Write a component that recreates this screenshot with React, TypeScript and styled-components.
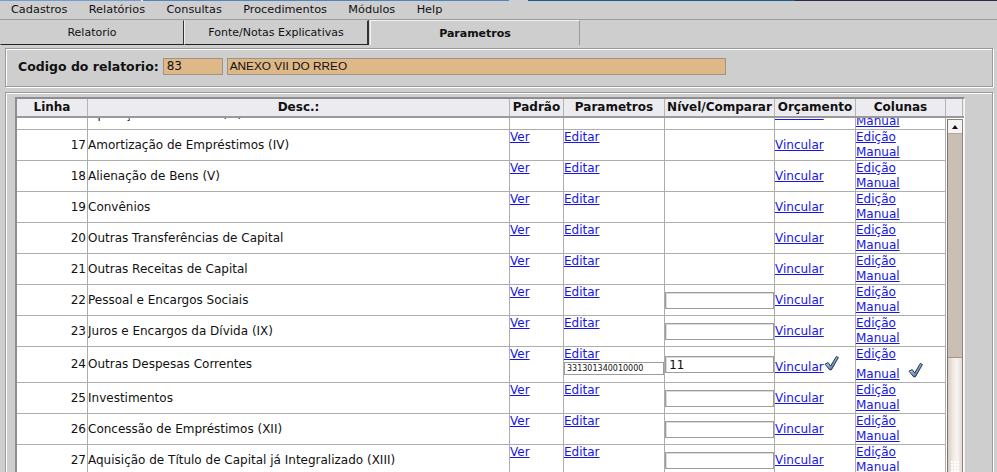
import React, { useId, useLayoutEffect, useRef } from 'react';
import styled, { createGlobalStyle } from 'styled-components';

const GlobalStyle = createGlobalStyle`
  html, body {
    margin: 0;
    height: 100%;
    overflow: hidden;
    background: #cecece;
    font-family: "DejaVu Sans", sans-serif;
    color: #111;
  }

  #root {
    height: 100%;
    display: flex;
    flex-direction: column;
  }
`;

const COLS = '71px 422px 54px 101px 110px 81px 90px';

const TopStrip = styled.div`
  height: 1px;
  flex: none;
  background: linear-gradient(
    to right,
    #6d9fd6 0,
    #6d9fd6 141px,
    #f0f0f0 141px,
    #f0f0f0 143px,
    #4f86c2 143px,
    #4f86c2 509px,
    #c3ced8 509px,
    #c3ced8 528px,
    #1b5b8c 528px,
    #1b5b8c 795px,
    #2c2c46 795px
  );
`;

const MenuBar = styled.nav`
  height: 18px;
  flex: none;
  display: flex;
  align-items: center;
  padding-left: 0.3px;
  border-bottom: 1px solid #9c9c9c;
`;

const MenuItem = styled.span`
  padding: 0 10.7px;
  font-size: 11.3px;
  line-height: 18px;
`;

const TabBar = styled.div`
  height: 25px;
  flex: none;
  display: flex;
`;

const Tab = styled.div<{ $active?: boolean; $width: number; $thick?: boolean }>`
  box-sizing: border-box;
  width: ${(p) => p.$width}px;
  display: flex;
  align-items: center;
  justify-content: center;
  font-size: 11px;
  font-weight: ${(p) => (p.$active ? 'bold' : 'normal')};
  border-left: 1px solid ${(p) => (p.$active ? '#f4f4f4' : '#f0f0f0')};
  border-top: 1px solid ${(p) => (p.$active ? '#f2f2f2' : '#cecece')};
  border-right: ${(p) => (p.$active ? '1px solid #9a9a9a' : p.$thick ? '2px solid #333' : '1px solid #333')};
  border-bottom: ${(p) => (p.$active ? 'none' : '1px solid #222')};
  margin-left: ${(p) => (p.$active ? '1px' : '0')};

  &:first-child {
    border-left-color: #cecece;
  }
`;

const Panel = styled.section<{ $grow?: boolean }>`
  box-sizing: border-box;
  width: 988px;
  margin-left: 5px;
  border: 1px solid #9a9a9a;
  box-shadow: inset 1px 1px 0 #fff, 1px 1px 0 #fff;
  flex: ${(p) => (p.$grow ? '1 0 auto' : 'none')};
`;

const CodePanel = styled(Panel)`
  height: 39px;
  margin-top: 3px;
  display: flex;
  align-items: center;
  padding: 0 0 2px 12px;
  gap: 4px;
`;

const CodeLabel = styled.label`
  font-size: 12.5px;
  font-weight: bold;
`;

const TanInput = styled.div<{ $width: number; $sans?: boolean }>`
  box-sizing: border-box;
  width: ${(p) => p.$width}px;
  height: 17px;
  background: #dfb887;
  border: 1px solid #9d9488;
  padding-left: ${(p) => (p.$sans ? 2 : 3)}px;
  font-family: ${(p) => (p.$sans ? '"Liberation Sans", Arial, sans-serif' : '"DejaVu Sans", sans-serif')};
  font-size: ${(p) => (p.$sans ? 11.8 : 12)}px;
  line-height: 15px;
`;

const GridPanel = styled(Panel)`
  margin-top: 5px;
  padding: 4px 0 0 9px;
`;

const GridFrame = styled.div`
  width: 947px;
  border-top: 2px solid #8e8e8e;
  border-left: 2px solid #8e8e8e;
  border-right: 1px solid #f4f4f4;
  background: #fff;
`;

const HeaderRow = styled.div`
  display: grid;
  grid-template-columns: ${COLS} 17px;
  height: 17px;
  background: #ececf0;
  border-bottom: 2px solid #9a9a9a;
`;

const HeaderCell = styled.div`
  border-right: 1px solid #b4b4b4;
  font-size: 12px;
  font-weight: bold;
  line-height: 17px;
  text-align: center;
  white-space: nowrap;
  overflow: hidden;
`;

const BodyArea = styled.div`
  display: flex;
  height: 362px;
`;

const Body = styled.div`
  width: 929px;
  height: 100%;
  overflow: hidden;
`;

const Row = styled.div`
  display: grid;
  grid-template-columns: ${COLS};
  border-bottom: 1px solid #adadad;
  font-size: 12px;
  line-height: 15px;
`;

const Cell = styled.div<{ $align?: 'start' | 'end'; $middle?: boolean }>`
  box-sizing: border-box;
  min-height: 30px;
  border-right: 1px solid #adadad;
  display: flex;
  flex-direction: column;
  justify-content: ${(p) => (p.$middle ? 'center' : 'flex-start')};
  align-items: ${(p) => (p.$align === 'end' ? 'flex-end' : 'flex-start')};
  padding-right: ${(p) => (p.$align === 'end' ? '1px' : '0')};
  white-space: nowrap;
  overflow: hidden;
`;

const Link = styled.a`
  color: #1515e6;
  text-decoration: underline;
  cursor: pointer;
`;

const LinkLine = styled.div`
  line-height: 15px;
`;

const LevelInput = styled.div`
  box-sizing: border-box;
  width: 109px;
  height: 17px;
  background: #fff;
  border: 1px solid #9c9c9c;
  box-shadow: inset 1px 1px 0 #dcdcdc;
  padding-left: 3px;
  font-family: "DejaVu Sans Mono", monospace;
  font-size: 12.5px;
  line-height: 15px;
`;

const ParamInput = styled.div`
  box-sizing: border-box;
  width: 100px;
  height: 13px;
  background: #fff;
  border: 1px solid #9c9c9c;
  padding-left: 2px;
  font-size: 8px;
  line-height: 11px;
`;

const CheckWrap = styled.span<{ $gap: number }>`
  display: inline-block;
  width: 15px;
  height: 16px;
  margin-left: ${(p) => p.$gap}px;
  vertical-align: baseline;

  svg {
    display: block;
  }
`;

const Filler = styled.div`
  width: 1px;
  background: #fff;
`;

const ScrollBar = styled.div`
  box-sizing: border-box;
  width: 16px;
  margin-top: 1px;
  border-left: 1px solid #7f7469;
  border-right: 1px solid #8c8278;
  border-top: 1px solid #8c8278;
  display: flex;
  flex-direction: column;
  background: #cabfb4;
`;

const UpButton = styled.div`
  height: 13px;
  flex: none;
  background: #f6f4f2;
  border-bottom: 1px solid #b2a79c;
  display: flex;
  align-items: center;
  justify-content: center;

  &::before {
    content: '';
    border-left: 3px solid transparent;
    border-right: 3px solid transparent;
    border-bottom: 4px solid #111;
  }
`;

const Track = styled.div`
  height: 223px;
  flex: none;
`;

const Thumb = styled.div`
  height: 218px;
  flex: none;
  border-top: 1px solid #a3978b;
  background: linear-gradient(to right, #d6ccc2, #efeae5 35%, #f7f4f1 65%, #e2dad2);
  display: flex;
  align-items: center;
  justify-content: center;
`;

const Grip = styled.div`
  width: 9px;
  height: 12px;
  background-image: radial-gradient(circle at 1px 1px, #fff 0.8px, #b7aba0 1.1px, transparent 1.4px);
  background-size: 3px 3px;
`;

const Check = ({ gap }: { gap: number }) => {
  const id = useId();
  return (
    <CheckWrap $gap={gap}>
      <svg width="15" height="16" viewBox="0 0 15 16">
        <defs>
          <linearGradient id={id} x1="0" y1="0" x2="1" y2="1">
            <stop offset="0" stopColor="#f2f8fd" />
            <stop offset="0.4" stopColor="#9cc0e4" />
            <stop offset="1" stopColor="#1f3d66" />
          </linearGradient>
        </defs>
        <path
          d="M1 9.2 L4.2 7.6 L6.6 11 L12.4 1.4 L14.4 2.6 L7.4 14.8 L5.6 14.8 Z"
          fill={`url(#${id})`}
          stroke="#15233a"
          strokeWidth="0.9"
          strokeLinejoin="round"
        />
      </svg>
    </CheckWrap>
  );
};

interface Line {
  num: number;
  desc: string;
  level?: boolean;
  code?: string;
  value?: string;
  checked?: boolean;
}

const lines: Line[] = [
  { num: 16, desc: 'Operações de Crédito (III)' },
  { num: 17, desc: 'Amortização de Empréstimos (IV)' },
  { num: 18, desc: 'Alienação de Bens (V)' },
  { num: 19, desc: 'Convênios' },
  { num: 20, desc: 'Outras Transferências de Capital' },
  { num: 21, desc: 'Outras Receitas de Capital' },
  { num: 22, desc: 'Pessoal e Encargos Sociais', level: true },
  { num: 23, desc: 'Juros e Encargos da Dívida (IX)', level: true },
  {
    num: 24,
    desc: 'Outras Despesas Correntes',
    code: '331301340010000',
    value: '11',
    checked: true,
  },
  { num: 25, desc: 'Investimentos', level: true },
  { num: 26, desc: 'Concessão de Empréstimos (XII)', level: true },
  { num: 27, desc: 'Aquisição de Título de Capital já Integralizado (XIII)', level: true },
  { num: 28, desc: 'Amortização da Dívida (XIV)', level: true },
];

const headers = ['Linha', 'Desc.:', 'Padrão', 'Parametros', 'Nível/Comparar', 'Orçamento', 'Colunas', ''];
const menu = ['Cadastros', 'Relatórios', 'Consultas', 'Procedimentos', 'Módulos', 'Help'];

const App = () => {
  const bodyRef = useRef<HTMLDivElement>(null);

  useLayoutEffect(() => {
    if (bodyRef.current) bodyRef.current.scrollTop = 19;
  }, []);

  return (
    <>
      <GlobalStyle />
      <TopStrip />
      <MenuBar>
        {menu.map((item) => (
          <MenuItem key={item}>{item}</MenuItem>
        ))}
      </MenuBar>
      <TabBar>
        <Tab $width={184}>Relatorio</Tab>
        <Tab $width={185} $thick>Fonte/Notas Explicativas</Tab>
        <Tab $width={210} $active>Parametros</Tab>
      </TabBar>
      <CodePanel>
        <CodeLabel>Codigo do relatorio:</CodeLabel>
        <TanInput $width={60}>83</TanInput>
        <TanInput $width={499} $sans>ANEXO VII DO RREO</TanInput>
      </CodePanel>
      <GridPanel $grow>
        <GridFrame>
          <HeaderRow>
            {headers.map((h, i) => (
              <HeaderCell key={i}>{h}</HeaderCell>
            ))}
          </HeaderRow>
          <BodyArea>
            <Body ref={bodyRef}>
              {lines.map((line) => (
                <Row key={line.num}>
                  <Cell $align="end" $middle>{line.num}</Cell>
                  <Cell $middle>{line.desc}</Cell>
                  <Cell>
                    <Link>Ver</Link>
                  </Cell>
                  <Cell>
                    <Link>Editar</Link>
                    {line.code && <ParamInput>{line.code}</ParamInput>}
                  </Cell>
                  <Cell $middle>
                    {(line.level || line.value !== undefined) && (
                      <LevelInput>{line.value}</LevelInput>
                    )}
                  </Cell>
                  <Cell $middle>
                    <LinkLine>
                      <Link>Vincular</Link>
                      {line.checked && <Check gap={0} />}
                    </LinkLine>
                  </Cell>
                  <Cell>
                    <LinkLine>
                      <Link>Edição</Link>
                    </LinkLine>
                    <LinkLine>
                      <Link>Manual</Link>
                      {line.checked && <Check gap={8} />}
                    </LinkLine>
                  </Cell>
                </Row>
              ))}
            </Body>
            <Filler />
            <ScrollBar>
              <UpButton />
              <Track />
              <Thumb>
                <Grip />
              </Thumb>
            </ScrollBar>
          </BodyArea>
        </GridFrame>
      </GridPanel>
    </>
  );
};

export default App;
